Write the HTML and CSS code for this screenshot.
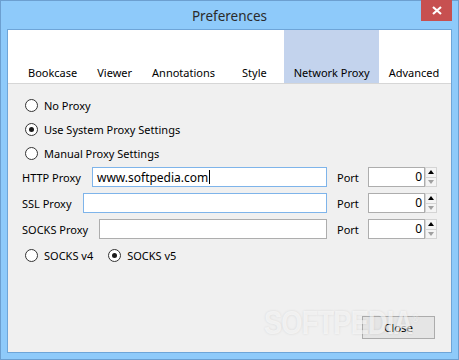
FILE: index.html
```html
<!DOCTYPE html>
<html lang="en">
<head>
    <meta charset="UTF-8">
    <meta name="viewport" content="width=device-width, initial-scale=1.0">
    <title>Preferences</title>
    <link rel="stylesheet" href="styles.css">
</head>
<body>
    <div class="window">
        <div class="titlebar">
            <span class="title">Preferences</span>
            <div class="close-x">
                <svg width="10" height="9" viewBox="0 0 10 9">
                    <path d="M1 1 L9 8 M9 1 L1 8" stroke="#fff" stroke-width="2.2" fill="none"/>
                </svg>
            </div>
        </div>

        <div class="client">
            <!-- tab strip -->
            <div class="tabs">
                <div class="tab">Bookcase</div>
                <div class="tab">Viewer</div>
                <div class="tab">Annotations</div>
                <div class="tab tab-style">Style</div>
                <div class="tab active">Network Proxy</div>
                <div class="tab">Advanced</div>
            </div>

            <div class="panel">
                <div class="radio-row"><span class="radio"></span>No Proxy</div>
                <div class="radio-row"><span class="radio checked"></span>Use System Proxy Settings</div>
                <div class="radio-row"><span class="radio"></span>Manual Proxy Settings</div>

                <div class="fields">
                    <div class="field-row">
                        <span class="field-label">HTTP Proxy</span>
                        <div class="text-box focused">www.softpedia.com<span class="caret"></span></div>
                        <span class="port-label">Port</span>
                        <div class="spin">
                            <div class="spin-value">0</div>
                            <div class="spin-arrows">
                                <span class="arrow up"></span>
                                <span class="arrow down"></span>
                            </div>
                        </div>
                    </div>
                    <div class="field-row">
                        <span class="field-label">SSL Proxy</span>
                        <div class="text-box hovered"></div>
                        <span class="port-label">Port</span>
                        <div class="spin">
                            <div class="spin-value">0</div>
                            <div class="spin-arrows">
                                <span class="arrow up"></span>
                                <span class="arrow down"></span>
                            </div>
                        </div>
                    </div>
                    <div class="field-row">
                        <span class="field-label">SOCKS Proxy</span>
                        <div class="text-box"></div>
                        <span class="port-label">Port</span>
                        <div class="spin">
                            <div class="spin-value">0</div>
                            <div class="spin-arrows">
                                <span class="arrow up"></span>
                                <span class="arrow down"></span>
                            </div>
                        </div>
                    </div>
                </div>

                <div class="socks-row">
                    <div class="radio-row"><span class="radio"></span>SOCKS v4</div>
                    <div class="radio-row"><span class="radio checked"></span>SOCKS v5</div>
                </div>

                <div class="footer">
                    <button class="close-btn">Close</button>
                </div>
            </div>
        </div>

        <div class="watermark">SOFTPEDIA<sup>®</sup></div>
    </div>
</body>
</html>
```

FILE: styles.css
```css
body {
    margin: 0;
    font-family: "Noto Sans", "Open Sans", sans-serif;
    font-size: 11px;
    color: #000;
}
.window {
    position: relative;
    width: 457px;
    height: 358px;
    border: 1px solid #6c9fd0;
    background: #8ecafa;
    display: flex;
    flex-direction: column;
}
.titlebar {
    height: 28px;
    display: flex;
    align-items: center;
    justify-content: center;
}
.title {
    font-size: 13.5px;
    color: #2b2b2b;
    margin-top: 2px;
}
.close-x {
    position: absolute;
    top: -1px;
    left: 420px;
    width: 31px;
    height: 21px;
    background: #c75050;
    display: flex;
    align-items: center;
    justify-content: center;
}
.client {
    flex: 1;
    margin: 0 6px 6px 6px;
    border: 1px solid #6ea5d8;
    background: #f0f0f0;
    display: flex;
    flex-direction: column;
}
.tabs {
    height: 53px;
    background: #fff;
    border-bottom: 1px solid #d6d6d6;
    display: flex;
    padding-left: 10px;
}
.tab {
    padding: 0 10px 3px 10px;
    display: flex;
    align-items: flex-end;
    white-space: nowrap;
}
.tab-style {
    padding: 0 17px 3px 17px;
}
.tab.active {
    padding: 0 9px 3px 10px;
    background: #c3d3ed;
}
.panel {
    flex: 1;
    display: flex;
    flex-direction: column;
    padding: 9px 14px 13px 14px;
}
.radio-row {
    height: 24px;
    display: flex;
    align-items: center;
    padding-left: 3px;
}
.radio {
    width: 11px;
    height: 11px;
    border: 1px solid #333;
    border-radius: 50%;
    background: #fff;
    margin-right: 6px;
    display: flex;
    align-items: center;
    justify-content: center;
}
.radio.checked::after {
    content: "";
    width: 5px;
    height: 5px;
    border-radius: 50%;
    background: #1a1a1a;
}
.fields {
    margin-top: 2px;
    display: flex;
    flex-direction: column;
    gap: 6px;
}
.field-row {
    display: flex;
    align-items: center;
    height: 20px;
}
.field-label {
    margin-right: 11px;
}
.text-box {
    flex: 1;
    height: 18px;
    border: 1px solid #adadad;
    background: #fff;
    display: flex;
    align-items: center;
    padding-left: 4px;
    font-size: 12px;
}
.text-box.focused,
.text-box.hovered {
    border-color: #7eb4ea;
}
.caret {
    width: 1px;
    height: 14px;
    background: #000;
    margin-left: 1px;
}
.port-label {
    width: 31px;
    margin-left: 10px;
}
.spin {
    display: flex;
    height: 20px;
}
.spin-value {
    width: 57px;
    border: 1px solid #adadad;
    background: #fff;
    text-align: right;
    line-height: 18px;
    padding-right: 2px;
    box-sizing: border-box;
    font-size: 12px;
}
.spin-arrows {
    width: 12px;
    display: flex;
    flex-direction: column;
}
.arrow {
    flex: 1;
    border: 1px solid #d4d4d4;
    background: #f4f4f4;
    display: flex;
    align-items: center;
    justify-content: center;
}
.arrow.down {
    border-top: none;
}
.arrow.up::after {
    content: "";
    border-left: 3px solid transparent;
    border-right: 3px solid transparent;
    border-bottom: 4px solid #000;
}
.arrow.down::after {
    content: "";
    border-left: 3px solid transparent;
    border-right: 3px solid transparent;
    border-top: 4px solid #a0a0a0;
}
.socks-row {
    margin-top: 4px;
    display: flex;
    gap: 12px;
}
.footer {
    margin-top: auto;
    display: flex;
    justify-content: flex-end;
    padding-right: 2px;
}
.close-btn {
    width: 73px;
    height: 23px;
    border: 1px solid #acacac;
    background: #e5e5e5;
    font-family: inherit;
    font-size: 11.5px;
    color: #000;
}
.watermark {
    position: absolute;
    left: 263px;
    top: 302px;
    font-family: "Liberation Sans", Arial, sans-serif;
    font-weight: bold;
    font-size: 34px;
    letter-spacing: -1px;
    transform: scaleX(0.8);
    transform-origin: left top;
    color: rgba(255, 255, 255, 0.6);
    text-shadow: 0 0 3px rgba(0, 0, 0, 0.1);
    pointer-events: none;
}
.watermark sup {
    font-size: 10px;
    font-weight: normal;
}
```
